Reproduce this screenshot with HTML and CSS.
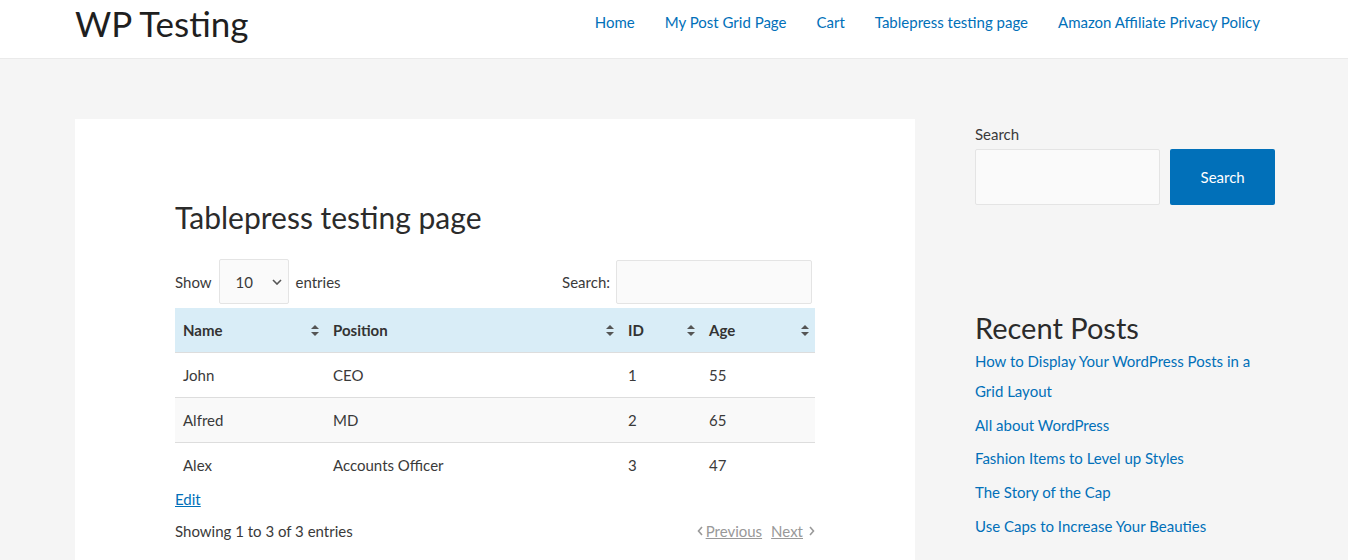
FILE: index.html
```html
<!DOCTYPE html>
<html>
<head>
<meta charset="utf-8">
<link rel="stylesheet" href="styles.css">
</head>
<body>
<header class="site-header">
  <div class="container header-inner">
    <div class="logo">WP Testing</div>
    <nav class="nav">
      <a href="#">Home</a>
      <a href="#">My Post Grid Page</a>
      <a href="#">Cart</a>
      <a href="#">Tablepress testing page</a>
      <a href="#">Amazon Affiliate Privacy Policy</a>
    </nav>
  </div>
</header>
<div class="container main">
  <article class="card">
    <h1 class="title">Tablepress testing page</h1>
    <div class="controls">
      <label class="show">Show
        <span class="select">10
          <svg width="10" height="6" viewBox="0 0 10 6"><path d="M1 1l4 4 4-4" fill="none" stroke="#555" stroke-width="1.6"/></svg>
        </span>
        entries</label>
      <label class="search">Search: <span class="search-input"></span></label>
    </div>
    <table class="tp">
      <thead>
        <tr>
          <th class="c-name">Name<span class="sort"></span></th>
          <th class="c-pos">Position<span class="sort"></span></th>
          <th class="c-id">ID<span class="sort"></span></th>
          <th class="c-age">Age<span class="sort"></span></th>
        </tr>
      </thead>
      <tbody>
        <tr><td>John</td><td>CEO</td><td>1</td><td>55</td></tr>
        <tr class="odd"><td>Alfred</td><td>MD</td><td>2</td><td>65</td></tr>
        <tr><td>Alex</td><td>Accounts Officer</td><td>3</td><td>47</td></tr>
      </tbody>
    </table>
    <a class="edit" href="#">Edit</a>
    <div class="footer-row">
      <span>Showing 1 to 3 of 3 entries</span>
      <span class="pager">
        <svg width="6" height="10" viewBox="0 0 6 10"><path d="M5 1L1.5 5 5 9" fill="none" stroke="#999" stroke-width="1.6"/></svg>
        <a href="#">Previous</a>
        <a href="#">Next</a>
        <svg width="6" height="10" viewBox="0 0 6 10"><path d="M1 1l3.5 4L1 9" fill="none" stroke="#999" stroke-width="1.6"/></svg>
      </span>
    </div>
  </article>
  <aside class="sidebar">
    <div class="widget-search">
      <div class="label">Search</div>
      <div class="search-row">
        <span class="side-input"></span>
        <button class="btn">Search</button>
      </div>
    </div>
    <div class="recent">
      <h2>Recent Posts</h2>
      <ul>
        <li><a href="#">How to Display Your WordPress Posts in a Grid Layout</a></li>
        <li><a href="#">All about WordPress</a></li>
        <li><a href="#">Fashion Items to Level up Styles</a></li>
        <li><a href="#">The Story of the Cap</a></li>
        <li><a href="#">Use Caps to Increase Your Beauties</a></li>
      </ul>
    </div>
  </aside>
</div>
</body>
</html>
```
FILE: styles.css
```css
* { box-sizing: border-box; }
html, body { margin: 0; padding: 0; }
body {
  background: #f5f5f5;
  font-family: Lato, "Liberation Sans", sans-serif;
  font-size: 15px;
  color: #3a3a3a;
  overflow: hidden;
}
a { color: #0170b9; text-decoration: none; }
.container { width: 1200px; margin-left: calc(50% - 599px); }
.site-header {
  background: #fff;
  border-bottom: 1px solid #eaeaea;
  height: 59px;
}
.header-inner {
  display: flex;
  justify-content: space-between;
  align-items: flex-start;
}
.logo {
  font-size: 35px;
  line-height: 46px;
  color: #1f1f1f;
}
.nav { display: flex; padding-top: 11px; }
.nav a { padding: 0 15px; line-height: 22px; font-size: 15px; }
.main {
  display: flex;
  gap: 60px;
  padding-top: 60px;
  align-items: flex-start;
}
.card {
  width: 840px;
  background: #fff;
  padding: 78px 100px 20px;
  height: 460px;
}
.title {
  font-weight: 400;
  font-size: 30px;
  line-height: 40px;
  margin: 0 0 22px;
  color: #2b2b2b;
}
.controls {
  display: flex;
  justify-content: space-between;
  align-items: center;
  width: 640px;
  margin-bottom: 4px;
}
.show, .search { display: flex; align-items: center; gap: 6px; }
.select {
  width: 70px;
  height: 45px;
  border: 1px solid #e4e4e4;
  border-radius: 2px;
  background: #fafafa;
  display: inline-flex;
  align-items: center;
  justify-content: space-between;
  padding: 0 6px 0 16px;
  margin: 0 1px;
}
.search { margin-right: 3px; }
.search-input {
  width: 196px;
  height: 44px;
  border: 1px solid #e4e4e4;
  border-radius: 2px;
  background: #fafafa;
}
.tp {
  width: 640px;
  border-collapse: collapse;
  border-spacing: 0;
}
.tp th {
  background: #d9edf7;
  text-align: left;
  font-weight: 700;
  height: 44px;
  padding: 0 8px;
  position: relative;
  color: #333;
  border-bottom: 1px solid #ddd;
}
.tp td {
  height: 45px;
  padding: 0 8px;
  border-top: 1px solid #ddd;
}
.tp tbody tr:first-child td { border-top: 0; }
.tp tr.odd td { background: #f9f9f9; }
.c-name { width: 150px; }
.c-pos { width: 295px; }
.c-id { width: 81px; }
.sort {
  position: absolute;
  right: 6px;
  top: 50%;
  width: 8px;
  height: 11px;
  margin-top: -5px;
}
.sort::before, .sort::after {
  content: "";
  position: absolute;
  left: 0;
  border-left: 4px solid transparent;
  border-right: 4px solid transparent;
}
.sort::before { top: 0; border-bottom: 4px solid #555; }
.sort::after { bottom: 0; border-top: 4px solid #555; }
.edit {
  display: inline-block;
  text-decoration: underline;
  margin-top: 2px;
  line-height: 20px;
}
.footer-row {
  width: 640px;
  display: flex;
  justify-content: space-between;
  align-items: center;
  margin-top: 13px;
}
.pager { display: flex; align-items: center; gap: 3px; }
.pager a { color: #999; text-decoration: underline; margin-right: 6px; }
.pager a:last-of-type { margin-right: 3px; }
.sidebar { width: 300px; }
.widget-search .label { line-height: 20px; margin-top: 5px; margin-bottom: 5px; }
.search-row { display: flex; gap: 10px; }
.side-input {
  width: 186px;
  height: 56px;
  background: #fafafa;
  border: 1px solid #e4e4e4;
  border-radius: 2px;
}
.btn {
  width: 105px;
  height: 56px;
  background: #0170b9;
  color: #fff;
  border: 0;
  border-radius: 2px;
  font: inherit;
  font-size: 15px;
}
.recent { margin-top: 105px; }
.recent h2 {
  font-weight: 400;
  font-size: 29px;
  line-height: 36px;
  margin: 0;
  color: #2b2b2b;
}
.recent ul { list-style: none; margin: 0; padding: 0; }
.recent li { line-height: 30px; margin-bottom: 3.7px; }
```
